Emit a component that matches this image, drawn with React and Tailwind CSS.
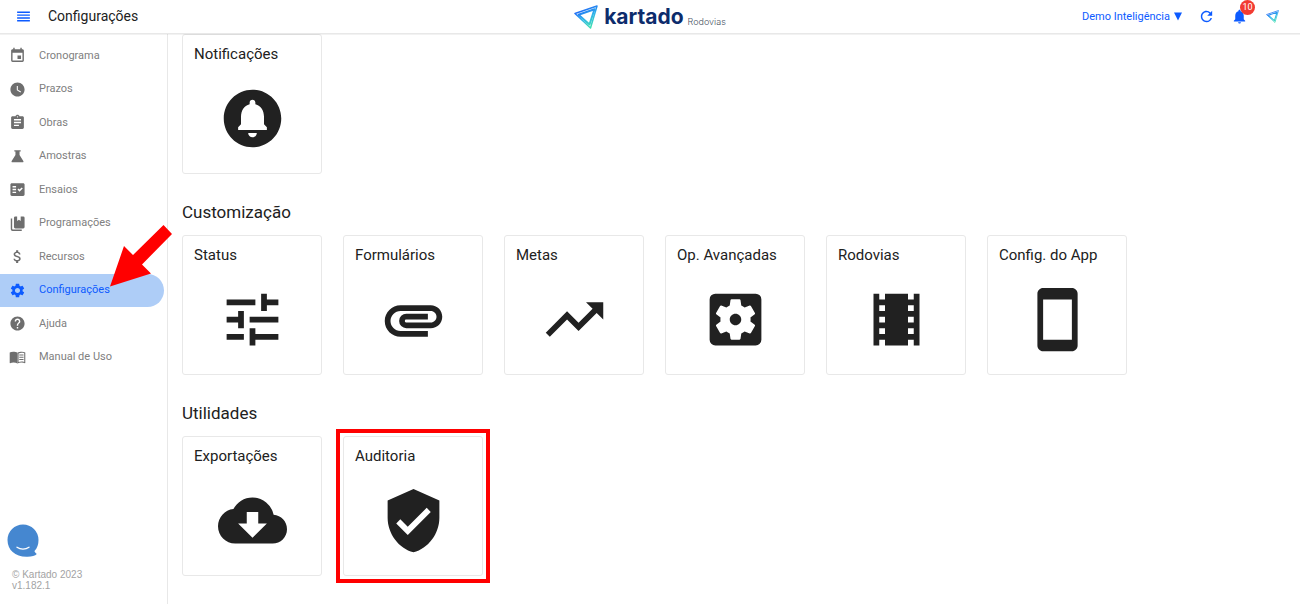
import React from "react";
import {
  MdAssignment,
  MdAttachMoney,
  MdAttachment,
  MdCircleNotifications,
  MdCloudDownload,
  MdEvent,
  MdFactCheck,
  MdHelp,
  MdNotifications,
  MdRefresh,
  MdReorder,
  MdSettings,
  MdSettingsApplications,
  MdStayCurrentPortrait,
  MdTheaters,
  MdTrendingUp,
  MdTune,
  MdVerifiedUser,
  MdWatchLater,
} from "react-icons/md";

function FlaskIcon({ size, className }) {
  return (
    <svg viewBox="0 0 24 24" width={size} height={size} fill="currentColor" className={className}>
      <path d="M7.500 3h9v2h-1.600v5l5.300 8.300c.6 1 .1 1.900-1.100 1.900H4.900c-1.200 0-1.700-.9-1.100-1.900L9.100 10V5H7.500Z" />
    </svg>
  );
}

function BooksIcon({ size, className }) {
  return (
    <svg viewBox="0 0 24 24" width={size} height={size} fill="currentColor" className={className}>
      <path d="M20 19H9a2 2 0 0 1-2-2V4a2 2 0 0 1 2-2h2.500v6.500l2.500-1.700 2.500 1.700V2H20a2 2 0 0 1 2 2v13a2 2 0 0 1-2 2Z" />
      <path d="M18 20.500v2H5a2.500 2.500 0 0 1-2.500-2.500V5h2v14.500a1 1 0 0 0 1 1Z" />
    </svg>
  );
}

function OpenBookIcon({ size, className }) {
  return (
    <svg viewBox="0 0 24 24" width={size} height={size} fill="currentColor" className={className}>
      <path d="M1 5c1.200-.8 3-1.200 5-1.200S10.500 4.300 12 5.300v15.200c-1.600-.9-3.600-1.300-5.600-1.300-1.800 0-3.500.3-4.900 1L1 19.900Z" />
      <path
        fillRule="evenodd"
        d="M12 5.300c1.500-1 4-1.500 6-1.500s3.800.4 5 1.200v14.900l-.5.300c-1.400-.7-3.100-1-4.900-1-2 0-4 .4-5.600 1.300Zm1.500.9v12.300c1.300-.5 2.800-.8 4.300-.8 1.200 0 2.500.1 3.700.5V5.900c-1-.4-2.200-.6-3.500-.6-1.600 0-3.300.3-4.500.9Z"
      />
      <path d="M14.500 7.800h6v1.500h-6Zm0 3.200h6v1.500h-6Zm0 3.200h6v1.500h-6Z" />
    </svg>
  );
}

const menuItems = [
  { label: "Cronograma", icon: MdEvent },
  { label: "Prazos", icon: MdWatchLater },
  { label: "Obras", icon: MdAssignment },
  { label: "Amostras", icon: FlaskIcon },
  { label: "Ensaios", icon: MdFactCheck },
  { label: "Programações", icon: BooksIcon },
  { label: "Recursos", icon: MdAttachMoney },
  { label: "Configurações", icon: MdSettings, active: true },
  { label: "Ajuda", icon: MdHelp },
  { label: "Manual de Uso", icon: OpenBookIcon },
];

const customization = [
  { label: "Status", icon: MdTune },
  { label: "Formulários", icon: MdAttachment },
  { label: "Metas", icon: MdTrendingUp },
  { label: "Op. Avançadas", icon: MdSettingsApplications },
  { label: "Rodovias", icon: MdTheaters },
  { label: "Config. do App", icon: MdStayCurrentPortrait },
];

const utilities = [
  { label: "Exportações", icon: MdCloudDownload },
  { label: "Auditoria", icon: MdVerifiedUser, highlighted: true },
];

function KartadoMark({ id, className }) {
  return (
    <svg viewBox="0 0 24 24" fill="none" className={className} aria-hidden="true">
      <defs>
        <linearGradient id={id} x1="6" y1="3" x2="16" y2="23" gradientUnits="userSpaceOnUse">
          <stop offset="0.1" stopColor="#1f6bf5" />
          <stop offset="0.5" stopColor="#2fb3ea" />
          <stop offset="1" stopColor="#3fe0b0" />
        </linearGradient>
      </defs>
      <g stroke={`url(#${id})`} strokeLinejoin="round">
        <path d="M1 8.500 23 1 16.500 23Z" strokeWidth="1.500" />
        <path d="M4.500 9.800 20.500 4.200 15.500 19.500Z" strokeWidth="2" />
      </g>
    </svg>
  );
}

function Header() {
  return (
    <header className="relative z-10 grid h-[34px] grid-cols-[1fr_auto_1fr] items-center border-b border-[#e8e8e8] bg-white shadow-2xs">
      <div className="flex items-center">
        <button aria-label="Menu" className="ml-[15px] text-[#0d5bff]">
          <MdReorder size={17} />
        </button>
        <h1 className="ml-4 text-[14px] text-[#212121]">Configurações</h1>
      </div>

      <a href="#" className="flex items-center">
        <KartadoMark id="logo" className="mr-1.5 h-6 w-6" />
        <span className="font-[Inter,sans-serif] text-[21px] leading-6 font-bold text-[#0d2c6c]">kartado</span>
        <span className="mt-2.5 ml-1 font-[Inter,sans-serif] text-[9px] font-light text-gray-600">Rodovias</span>
      </a>

      <div className="flex items-center justify-end pr-[21px] text-[#0d5bff]">
        <button className="flex items-center gap-1 text-[11px] leading-4">
          Demo Inteligência
          <svg viewBox="0 0 8 9" className="h-[9px] w-2" fill="currentColor" aria-hidden="true">
            <path d="M0 .5h8L4 8.500Z" />
          </svg>
        </button>
        <button aria-label="Atualizar" className="ml-4">
          <MdRefresh size={17} />
        </button>
        <button aria-label="Alertas" className="relative ml-4">
          <MdNotifications size={17} />
          <span className="absolute -top-2 left-[9px] flex h-[15px] w-[15px] items-center justify-center rounded-full bg-[#f23b32] text-[9px] text-white">
            10
          </span>
        </button>
        <a href="#" aria-label="Kartado" className="ml-[18px]">
          <KartadoMark id="mark" className="h-[13px] w-[13px]" />
        </a>
      </div>
    </header>
  );
}

function MenuItem({ label, icon: Icon, active }) {
  return (
    <li className="relative flex">
      <a
        href="#"
        className={`mr-[3px] flex flex-1 items-center gap-[13px] rounded-r-full pl-[9px] text-[11px] ${
          active ? "bg-[#aecdf7] text-[#0d5bff]" : "text-[#808080]"
        }`}
      >
        <Icon size={17} className={active ? "text-[#0d5bff]" : "text-[#6e6e6e]"} />
        {label}
      </a>
      {/* Arrow that points at the current item */}
      {active && (
        <svg
          viewBox="0 0 62 62"
          className="absolute bottom-5 left-[110px] z-20 h-[62px] w-[62px]"
          aria-hidden="true"
        >
          <path d="M0 61.500 14 21 23 30 53.500 0 62 9 32 39.500 41 48.500Z" fill="#ff0000" />
        </svg>
      )}
    </li>
  );
}

function Sidebar() {
  return (
    <aside className="flex w-[168px] shrink-0 flex-col border-r border-[#e8e8e8] pt-[5px]">
      <nav>
        <ul className="grid h-[335px] auto-rows-fr">
          {menuItems.map((item) => (
            <MenuItem key={item.label} {...item} />
          ))}
        </ul>
      </nav>

      <div className="mt-auto pb-[13px]">
        <button aria-label="Chat" className="ml-[7px] block">
          <svg viewBox="0 0 32 34" className="h-[34px] w-8">
            <path
              d="M16 .5a15.500 15.500 0 0 1 15.500 15.500c0 4.500-1.200 8-4 11 .3 1.300 1 2 2.300 3-1.800 1.800-5.500 3-10.300 2.800C8 32.500.5 26 .5 16A15.500 15.500 0 0 1 16 .5Z"
              fill="#4587d0"
            />
            <path d="M10 23.200c3.500 2.600 8.500 2.600 12 0" fill="none" stroke="#fff" strokeWidth="1.300" strokeLinecap="round" />
          </svg>
        </button>
        <p className="mt-[11px] ml-3 font-['Liberation_Sans',sans-serif] text-[10px] leading-[11px] text-[#a3a3a3]">
          © Kartado 2023
          <br />
          v1.182.1
        </p>
      </div>
    </aside>
  );
}

function Card({ label, icon: Icon, highlighted }) {
  return (
    <a
      href="#"
      className="relative flex h-[140px] w-[140px] flex-col rounded-[3px] border border-[#e8e8e8] pt-[9px] text-[#212121]"
    >
      <span className="pl-[11px] text-[15px] leading-5">{label}</span>
      <Icon size={69} className="mx-auto mt-5" />
      {highlighted && <span className="absolute -inset-2 border-4 border-[#ff0000]" />}
    </a>
  );
}

function Section({ title, items }) {
  return (
    <section>
      {title && <h2 className="mt-[26px] mb-[11px] text-[17px] leading-6 text-[#212121]">{title}</h2>}
      <div className="flex flex-wrap gap-[21px]">
        {items.map((item) => (
          <Card key={item.label} {...item} />
        ))}
      </div>
    </section>
  );
}

export default function App() {
  return (
    <div className="flex min-h-screen flex-col bg-white font-[Roboto,sans-serif]">
      <Header />
      <div className="flex flex-1">
        <Sidebar />
        <main className="flex-1 px-3.5">
          <Section items={[{ label: "Notificações", icon: MdCircleNotifications }]} />
          <Section title="Customização" items={customization} />
          <Section title="Utilidades" items={utilities} />
        </main>
      </div>
    </div>
  );
}
